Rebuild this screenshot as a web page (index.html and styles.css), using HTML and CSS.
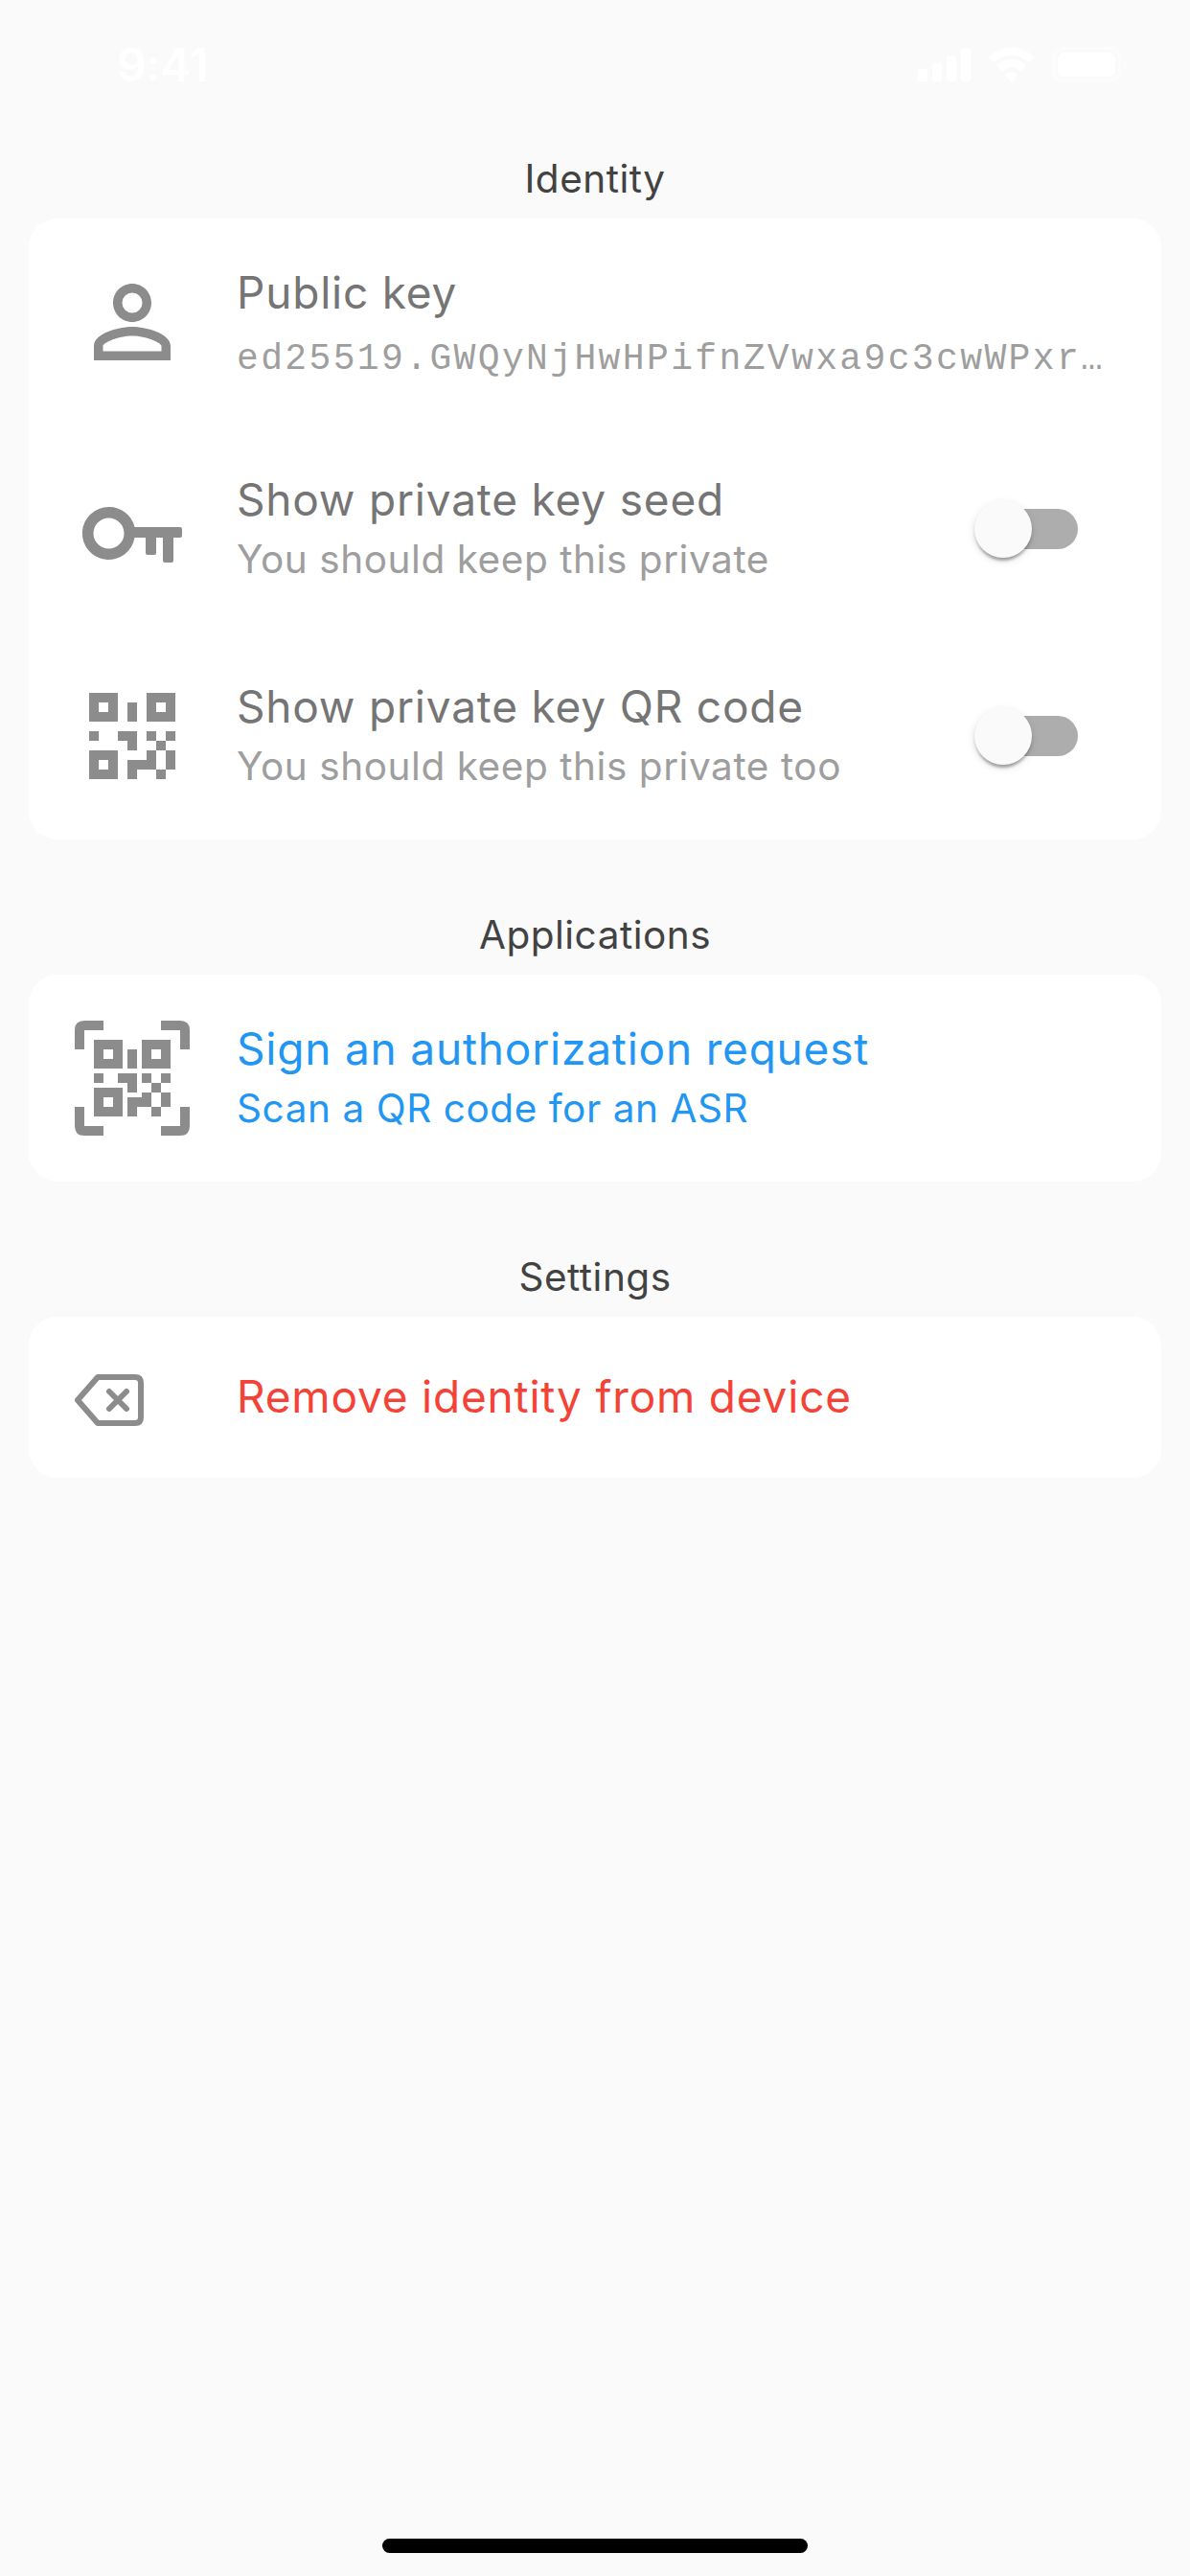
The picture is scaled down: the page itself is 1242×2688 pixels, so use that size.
FILE: index.html
```html
<!DOCTYPE html>
<html lang="en">
<head>
<meta charset="utf-8">
<title>Identity</title>
<link rel="stylesheet" href="styles.css">
</head>
<body>
<header class="status">
  <span class="time">9:41</span>
  <svg class="status-icons" width="224" height="40" viewBox="0 0 224 40" fill="#fff">
    <rect x="2" y="24" width="10" height="13" rx="3"/><rect x="17" y="18" width="10" height="19" rx="3"/><rect x="32" y="10" width="10" height="27" rx="3"/><rect x="47" y="2" width="10" height="35" rx="3"/>
    <g fill="none" stroke="#fff" stroke-width="8"><path d="M78.500 14.500Q99.500 -4 120.500 14.500"/><path d="M86.500 23.500Q99.500 13 112.500 23.500"/></g><path d="M92.500 29.500q7-5.500 14 0l-7 7.500z"/>
    <rect x="143.500" y="2.500" width="69" height="34" rx="10" fill="none" stroke="#fff" stroke-opacity=".4" stroke-width="3"/><rect x="148" y="7" width="60" height="25" rx="6"/><path d="M217 14q7 5.500 0 11z" opacity=".4"/>
  </svg>
</header>
<main>
  <h2 class="heading">Identity</h2>
  <section class="card">
    <div class="row">
      <svg class="icon" viewBox="0 0 24 24"><path d="M12 5.900a2.100 2.100 0 1 1 0 4.200 2.100 2.100 0 0 1 0-4.200m0 9c2.970 0 6.100 1.460 6.100 2.100v1.100H5.900V17c0-.640 3.130-2.100 6.100-2.100M12 4C9.790 4 8 5.790 8 8s1.790 4 4 4 4-1.790 4-4-1.790-4-4-4zm0 9c-2.670 0-8 1.340-8 4v3h16v-3c0-2.660-5.330-4-8-4z"/></svg>
      <div class="copy"><span class="title">Public key</span><span class="key">ed25519.GWQyNjHwHPifnZVwxa9c3cwWPxr…</span></div>
    </div>
    <div class="row">
      <svg class="icon" viewBox="0 0 120 120"><path fill-rule="evenodd" d="M35.500 37a27.500 27.500 0 0 1 27 21H110q2 0 2 2v7q0 2-2 2h-7v24q0 2-2 2h-7q-2 0-2-2V69h-7v16q0 2-2 2h-7q-2 0-2-2V69H62.500A27.500 27.500 0 1 1 35.500 37zm0 11.500a16 16 0 1 0 0 32a16 16 0 0 0 0-32z"/></svg>
      <div class="copy"><span class="title">Show private key seed</span><span class="sub">You should keep this private</span></div>
      <span class="switch"><span class="thumb"></span></span>
    </div>
    <div class="row">
      <svg class="icon" viewBox="0 0 120 120" shape-rendering="crispEdges"><path fill-rule="evenodd" d="M15 15h30v30H15zm10 10v10h10V25zM75 15h30v30H75zm10 10v10h10V25zM15 75h30v30H15zm10 10v10h10V85zM55 25h10v20H55zM15 55h10v10H15zM45 55h20v20H55V65H45zM75 55h10v10H75zM95 55h10v10H95zM85 65h10v10H85zM75 75h10v20H65v10H55V85h20zM95 75h10v20H95zM85 95h10v10H85z"/></svg>
      <div class="copy"><span class="title">Show private key QR code</span><span class="sub">You should keep this private too</span></div>
      <span class="switch"><span class="thumb"></span></span>
    </div>
  </section>
  <h2 class="heading">Applications</h2>
  <section class="card">
    <div class="row blue">
      <svg class="icon" viewBox="0 0 120 120"><path fill-rule="evenodd" d="M0 30V10Q0 0 10 0H30V10H10V30zM90 0h20q10 0 10 10v20h-10V10H90zM0 90h10v20h20v10H10q-10 0-10-10zM110 90h10v20q0 10-10 10H90v-10h20zM20 20h30v30H20zm10 10v10h10V30zM70 20h30v30H70zm10 10v10h10V30zM20 70h30v30H20zm10 10v10h10V80zM55 30h10v20H55zM20 55h10v10H20zM45 55h20v20H55V65H45zM70 55h10v10H70zM90 55h10v10H90zM80 65h10v10H80zM70 75h10v15H65v10H55V80h15zM90 75h10v15H90zM80 90h10v10H80z"/></svg>
      <div class="copy"><span class="title">Sign an authorization request</span><span class="sub">Scan a QR code for an ASR</span></div>
    </div>
  </section>
  <h2 class="heading">Settings</h2>
  <section class="card">
    <div class="row short red">
      <svg class="icon small" viewBox="0 0 72 54"><g fill="none" stroke="#8c8c8c" stroke-width="6" stroke-linejoin="round" stroke-linecap="round"><path d="M24 3H63Q69 3 69 9V45Q69 51 63 51H24L3 27z"/><path d="M36 18L54 36M54 18L36 36"/></g></svg>
      <div class="copy"><span class="title">Remove identity from device</span></div>
    </div>
  </section>
</main>
<div class="home"></div>
</body>
</html>
```
FILE: styles.css
```css
* { box-sizing: border-box; }
body {
  margin: 0;
  height: 2688px;
  display: flex;
  flex-direction: column;
  background: #fafafa;
  font-family: Inter, "Liberation Sans", sans-serif;
  overflow: hidden;
}
.status {
  height: 132px;
  flex: none;
  display: flex;
  justify-content: space-between;
  padding: 48px 62px 0 122px;
}
.time { color: #fff; font-size: 48px; line-height: 40px; font-weight: 600; letter-spacing: -0.4px; }
main { flex: 1; padding: 0 30px; }
.heading {
  margin: 0;
  height: 96px;
  padding-top: 31px;
  text-align: center;
  font-size: 40.5px;
  line-height: 48px;
  font-weight: 400;
  letter-spacing: 0.5px;
  color: #424242;
}
.card + .heading { height: 141px; padding-top: 76px; }
.card { background: #fff; border-radius: 30px; }
.row { height: 216px; display: flex; align-items: center; padding: 0 48px; }
.row.short { height: 168px; }
.icon { width: 120px; height: 120px; flex: none; fill: #8c8c8c; margin-right: 49px; }
.icon.small { width: 72px; height: 54px; margin: 6px 97px 0 0; }
.copy { flex: 1; min-width: 0; display: flex; flex-direction: column; gap: 3px; white-space: nowrap; align-self: flex-start; padding-top: 47px; }
.short .copy { padding-top: 53px; }
.title { font-size: 46px; line-height: 60px; letter-spacing: 0.8px; color: #757575; }
.sub { font-size: 40.5px; line-height: 60px; letter-spacing: 0.56px; color: #9e9e9e; }
.key { font-family: "Liberation Mono", monospace; font-size: 38px; line-height: 60px; letter-spacing: 2.37px; padding-top: 7px; color: #9e9e9e; }
.blue .title, .blue .sub { color: #2196f3; }
.red .title { color: #f44336; }
.switch { width: 99px; height: 42px; border-radius: 21px; background: #adadad; margin-right: 39px; display: flex; align-items: center; }
.thumb { width: 60px; height: 60px; flex: none; margin-left: -9px; border-radius: 50%; background: #fafafa; box-shadow: 0 6px 3px -3px rgba(0,0,0,.2), 0 3px 3px rgba(0,0,0,.14), 0 3px 9px rgba(0,0,0,.12); }
.home { flex: none; width: 444px; height: 15px; margin: 0 auto 24px; border-radius: 8px; background: #000; }
```
